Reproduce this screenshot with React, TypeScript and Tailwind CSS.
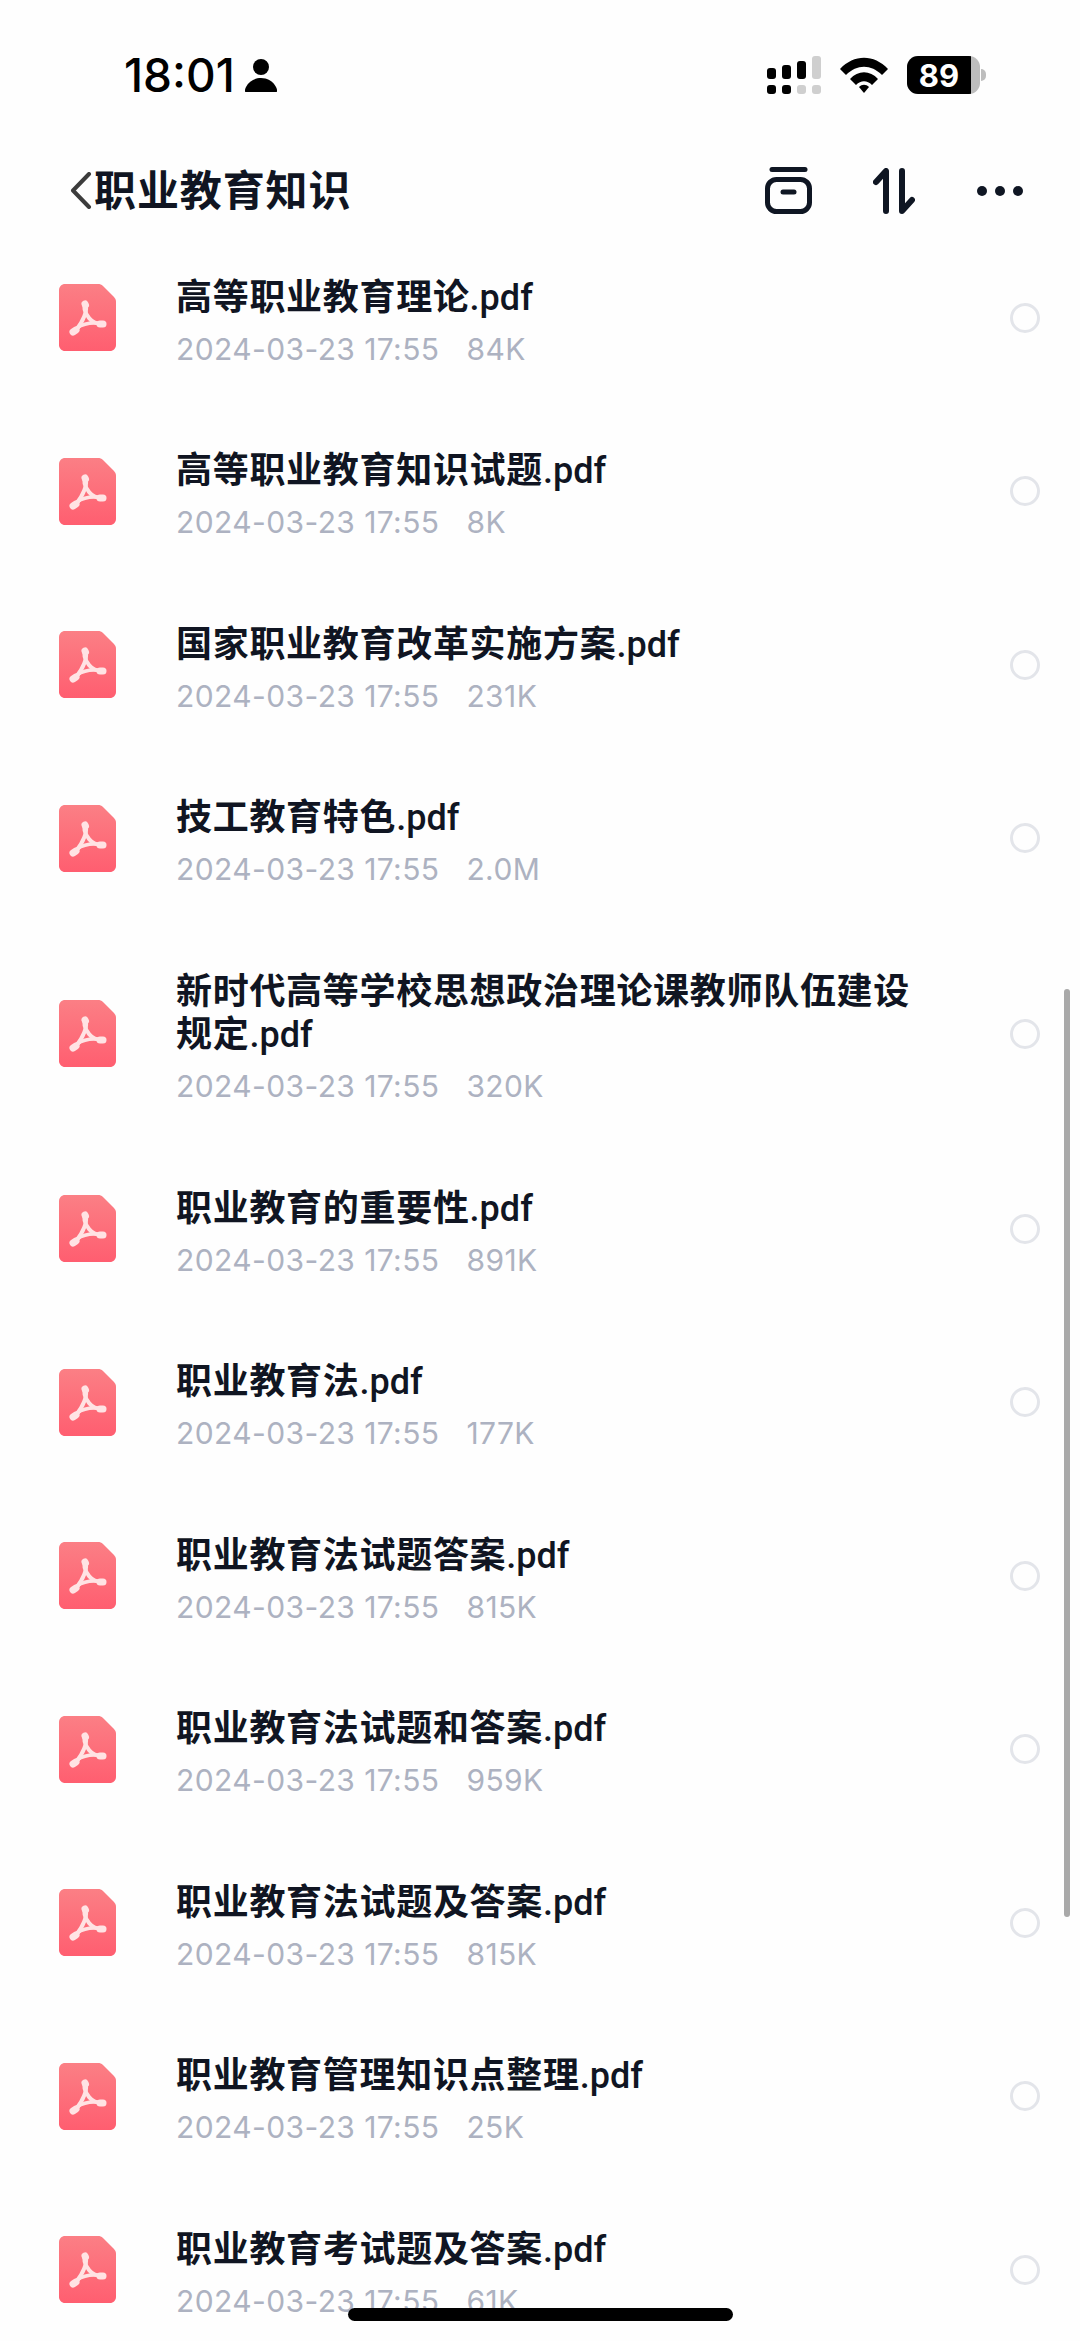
const files = [
  { name: "高等职业教育理论.pdf", size: "84K" },
  { name: "高等职业教育知识试题.pdf", size: "8K" },
  { name: "国家职业教育改革实施方案.pdf", size: "231K" },
  { name: "技工教育特色.pdf", size: "2.0M" },
  { name: "新时代高等学校思想政治理论课教师队伍建设规定.pdf", size: "320K" },
  { name: "职业教育的重要性.pdf", size: "891K" },
  { name: "职业教育法.pdf", size: "177K" },
  { name: "职业教育法试题答案.pdf", size: "815K" },
  { name: "职业教育法试题和答案.pdf", size: "959K" },
  { name: "职业教育法试题及答案.pdf", size: "815K" },
  { name: "职业教育管理知识点整理.pdf", size: "25K" },
  { name: "职业教育考试题及答案.pdf", size: "61K" },
];

const font = "font-['Inter','Noto_Sans_CJK_SC',sans-serif]";

function PdfIcon() {
  return (
    <svg width="57" height="67" viewBox="0 0 57 67" className="shrink-0">
      <defs>
        <linearGradient id="pdf-bg" x1="0" y1="0" x2="0" y2="1">
          <stop offset="0" stopColor="#fb7f85" />
          <stop offset="1" stopColor="#ff5e70" />
        </linearGradient>
      </defs>
      <path
        d="M6 0H39C41 0 42.500 .6 44 2L55 13C56.400 14.500 57 16 57 18V61C57 64.300 54.300 67 51 67H6C2.700 67 0 64.300 0 61V6C0 2.700 2.700 0 6 0Z"
        fill="url(#pdf-bg)"
      />
      <g fill="none" stroke="#ffe3e4" strokeLinecap="round">
        <path d="M26 20C24 24 27 30 30 34C33 38 38 40 44 40" strokeWidth="4" />
        <path d="M26 20C29 25 26 32 22 39C20 43 17 46 14 48" strokeWidth="4" />
        <path d="M18 44C24 40 34 38 44 40" strokeWidth="3.500" />
        <path d="M26 20L26.500 21" strokeWidth="7" />
        <path d="M14 48L17 46" strokeWidth="7" />
        <path d="M44 40L41 40" strokeWidth="7" />
      </g>
    </svg>
  );
}

function FileRow({ name, size }: { name: string; size: string }) {
  const base = name.replace(".pdf", "");
  return (
    <div className="flex items-center pl-[59px] pr-[40px] py-[35.500px]">
      <PdfIcon />
      <div className="ml-[60px] flex-1 pt-[9px]">
        <p className="max-w-[750px] text-[36px] leading-[43.500px] font-semibold tracking-[0.7px] text-[#101522] break-all">
          {base}
          <span className="font-['Roboto'] leading-none font-medium tracking-normal">.pdf</span>
        </p>
        <p className="mt-[12px] mb-[2px] flex h-[36px] items-center text-[30px] tracking-[0.4px] text-[#adb2c1]">
          <span>2024-03-23 17:55</span>
          <span className="ml-[27px]">{size}</span>
        </p>
      </div>
      <div className="h-[30px] w-[30px] shrink-0 rounded-full border-[3px] border-[#e3e5ea]" />
    </div>
  );
}

export default function App() {
  return (
    <div className={`relative h-[2341px] w-[1080px] overflow-hidden bg-[#fefefe] ${font}`}>
      {/* Status bar */}
      <div className="flex h-[150px] items-center pl-[124px] pr-[94px]">
        <span className="text-[46px] leading-none font-medium text-black">18:01</span>
        <svg width="32" height="34" viewBox="0 0 32 34" className="ml-[10px]">
          <circle cx="16" cy="9" r="8" fill="#000" />
          <path d="M1 34C-1 34 0 31 1 29C4 23 10 20 16 20C22 20 28 23 31 29C32 31 33 34 31 34Z" fill="#000" />
        </svg>
        <div className="ml-auto flex items-center">
          <svg width="54" height="39" viewBox="0 0 54 39">
            <g fill="#000">
              <rect x="0" y="12" width="9" height="11" rx="3" />
              <rect x="15" y="9" width="9" height="14" rx="3" />
              <rect x="30" y="5" width="9" height="18" rx="3" />
              <rect x="0" y="29" width="9" height="9" rx="3" />
              <rect x="15" y="29" width="9" height="9" rx="3" />
            </g>
            <g fill="#cfcfcf">
              <rect x="45" y="0" width="9" height="23" rx="3" />
              <rect x="30" y="29" width="9" height="9" rx="3" />
              <rect x="45" y="29" width="9" height="9" rx="3" />
            </g>
          </svg>
          <svg width="48" height="36" viewBox="0 0 48 36" className="ml-[19px]">
            <path d="M0 12C14 -3 34 -3 48 12L42 18C31 7 17 7 6 18Z" fill="#000" />
            <path d="M10 22C18 13 30 13 38 22L32 28C27 23 21 23 16 28Z" fill="#000" />
            <path d="M19 30C22 27 26 27 29 30L24 36Z" fill="#000" />
          </svg>
          <div className="ml-[19px] flex items-center">
            <div className="relative flex h-[38px] w-[73px] overflow-hidden rounded-[11px] bg-[#bdbdbd]">
              <div className="flex h-full w-[64px] items-center justify-center bg-black text-[31px] leading-none font-bold text-white">
                89
              </div>
            </div>
            <div className="ml-[1px] h-[12px] w-[5px] rounded-r-full bg-[#bdbdbd]" />
          </div>
        </div>
      </div>

      {/* Nav bar */}
      <div className="flex h-[81px] items-center pl-[70px] pr-[57px]">
        <svg width="22" height="37" viewBox="0 0 22 37" fill="none" stroke="#3c3c3c" strokeWidth="4" strokeLinecap="round" strokeLinejoin="round">
          <path d="M19 2L3 18.500L19 35" />
        </svg>
        <span className="ml-[2px] text-[42px] leading-none font-semibold tracking-[0.9px] text-[#101522]">职业教育知识</span>
        <svg width="47" height="47" viewBox="0 0 47 47" fill="none" stroke="#0f1623" strokeLinecap="round" className="ml-auto">
          <path d="M7 2.500H40" strokeWidth="5" />
          <rect x="2.500" y="12.500" width="42" height="32" rx="9" strokeWidth="5" />
          <path d="M18 25H29" strokeWidth="5" />
        </svg>
        <svg width="42" height="46" viewBox="0 0 42 46" fill="none" stroke="#0f1623" strokeWidth="6" strokeLinecap="round" strokeLinejoin="round" className="ml-[61px]">
          <path d="M3 14L13 3V43" />
          <path d="M29 3V43L39 32" />
        </svg>
        <div className="ml-[62px] flex items-center gap-[8px]">
          <span className="h-[10px] w-[10px] rounded-full bg-[#0f1623]" />
          <span className="h-[10px] w-[10px] rounded-full bg-[#0f1623]" />
          <span className="h-[10px] w-[10px] rounded-full bg-[#0f1623]" />
        </div>
      </div>

      {/* File list */}
      <div>
        {files.map((f) => (
          <FileRow key={f.name} name={f.name} size={f.size} />
        ))}
      </div>

      {/* Scrollbar */}
      <div className="absolute left-[1064px] top-[989px] h-[928px] w-[6px] rounded-full bg-[#a9a9a9]" />

      {/* Home indicator */}
      <div className="absolute left-[348px] top-[2308px] h-[13px] w-[385px] rounded-full bg-black" />
    </div>
  );
}
